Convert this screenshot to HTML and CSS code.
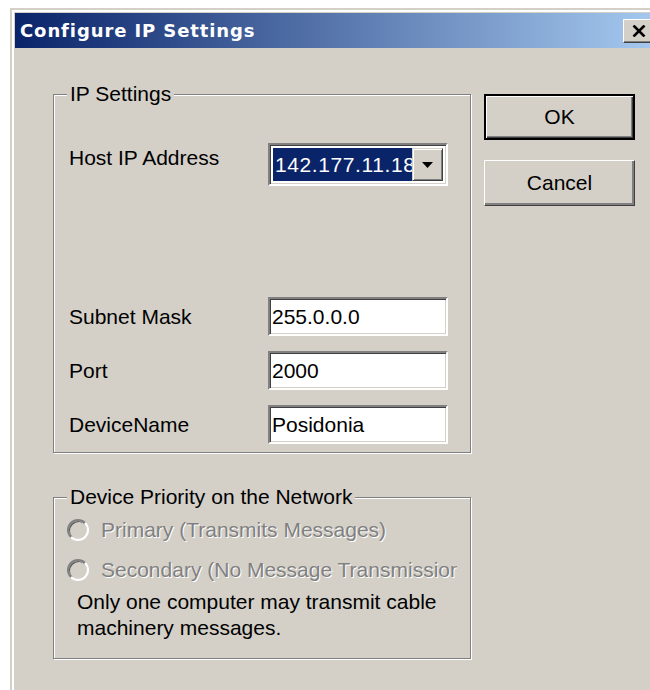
FILE: index.html
```html
<!DOCTYPE html>
<html lang="en">
<head>
<meta charset="utf-8">
<title>Configure IP Settings</title>
<link rel="stylesheet" href="styles.css">
</head>
<body>
<div class="window">
  <div class="titlebar">
    <span class="title">Configure IP Settings</span>
    <button class="close" type="button" aria-label="Close">
      <svg width="14" height="12" viewBox="0 0 14 12" aria-hidden="true">
        <path d="M1.5 0.5 L12.5 11.5 M12.5 0.5 L1.5 11.5" stroke="#000" stroke-width="2.6" fill="none"/>
      </svg>
    </button>
  </div>
  <div class="content">
    <div class="groups">
      <fieldset class="group group-ip">
        <legend>IP Settings</legend>
        <div class="row row-host">
          <span class="label">Host IP Address</span>
          <div class="combo">
            <span class="combo-value">142.177.11.18</span>
            <span class="combo-btn">
              <svg width="11" height="6" viewBox="0 0 11 6" aria-hidden="true"><path d="M0 0 H11 L5.5 6 Z" fill="#000"/></svg>
            </span>
          </div>
        </div>
        <div class="row row-field">
          <span class="label">Subnet Mask</span>
          <div class="field">255.0.0.0</div>
        </div>
        <div class="row row-field">
          <span class="label">Port</span>
          <div class="field">2000</div>
        </div>
        <div class="row row-field">
          <span class="label">DeviceName</span>
          <div class="field">Posidonia</div>
        </div>
      </fieldset>
      <fieldset class="group group-priority">
        <legend>Device Priority on the Network</legend>
        <div class="radio">
          <span class="radio-dot"></span>
          <span class="radio-label">Primary (Transmits Messages)</span>
        </div>
        <div class="radio">
          <span class="radio-dot"></span>
          <span class="radio-label">Secondary (No Message Transmission)</span>
        </div>
        <p class="note">Only one computer may transmit cable<br>machinery messages.</p>
      </fieldset>
    </div>
    <div class="actions">
      <button class="btn btn-default" type="button">OK</button>
      <button class="btn" type="button">Cancel</button>
    </div>
  </div>
</div>
</body>
</html>
```

FILE: styles.css
```css
html, body {
  margin: 0;
  padding: 0;
  background: #fff;
  overflow: hidden;
  height: 690px;
}

body {
  font-family: "Liberation Sans", Arial, sans-serif;
  font-size: 21px;
  color: #000;
}

/* dialog frame */
.window {
  margin: 8px 0 0 10px;
  width: 649px;
  height: 720px;
  box-sizing: border-box;
  border: 2px solid #d4d0c8;
  border-right: 0;
  padding: 3px 0 0 3px;
  background: #d4d0c8;
  box-shadow: inset 2px 2px 0 #fff;
}

.titlebar {
  height: 35px;
  display: flex;
  align-items: center;
  justify-content: space-between;
  padding: 0 4px 0 5px;
  background: linear-gradient(to right, #0a246a, #a6caf0);
}

.title {
  font-family: "DejaVu Sans", Verdana, sans-serif;
  font-weight: bold;
  font-size: 18px;
  letter-spacing: 0.9px;
  color: #fff;
}

.close {
  width: 32px;
  height: 24px;
  padding: 0;
  display: flex;
  align-items: center;
  justify-content: center;
  background: #d4d0c8;
  border: 1px solid;
  border-color: #fff #404040 #404040 #fff;
  box-shadow: inset -1px -1px 0 #808080;
}

/* dialog body */
.content {
  display: flex;
  align-items: flex-start;
  gap: 13px;
  padding: 34px 0 0 38px;
}

.groups {
  display: flex;
  flex-direction: column;
}

.group {
  width: 418px;
  box-sizing: border-box;
  margin: 0;
  min-width: 0;
  border: 1px solid #808080;
  box-shadow: inset 1px 1px 0 #fff, 1px 1px 0 #fff;
  padding: 0 0 0 13px;
}

.group legend {
  padding: 0 3px;
  line-height: 24px;
  background: #d4d0c8;
}

.group-ip {
  padding-top: 37px;
  padding-bottom: 8px;
}

.group-priority {
  margin-top: 32px;
  padding-top: 9px;
  padding-bottom: 17px;
}

/* label / input rows */
.row {
  display: flex;
  align-items: center;
  margin-left: 2px;
}

.label {
  width: 199px;
  flex: none;
  line-height: 24px;
}

.row-host {
  align-items: flex-start;
}

.row-host .label {
  padding-top: 3px;
}

.row-host + .row-field {
  margin-top: 111px;
}

.row-field + .row-field {
  margin-top: 15px;
}

.field {
  width: 180px;
  height: 39px;
  box-sizing: border-box;
  background: #fff;
  border: 2px solid;
  border-color: #808080 #fff #fff #808080;
  box-shadow: inset 1px 1px 0 #404040, inset -1px -1px 0 #d4d0c8;
  padding-left: 2px;
  line-height: 35px;
  white-space: nowrap;
  overflow: hidden;
}

.combo {
  width: 180px;
  height: 43px;
  box-sizing: border-box;
  display: flex;
  background: #fff;
  border: 2px solid;
  border-color: #808080 #fff #fff #808080;
  box-shadow: inset 1px 1px 0 #404040, inset -1px -1px 0 #d4d0c8;
  padding: 3px;
}

.combo-value {
  flex: 1;
  min-width: 0;
  background: #0a246a;
  color: #fff;
  padding-left: 2px;
  letter-spacing: 0.6px;
  line-height: 33px;
  white-space: nowrap;
  overflow: hidden;
}

.combo-btn {
  width: 31px;
  flex: none;
  box-sizing: border-box;
  display: flex;
  align-items: center;
  justify-content: center;
  background: #d4d0c8;
  border: 1px solid;
  border-color: #d4d0c8 #404040 #404040 #d4d0c8;
  box-shadow: inset 1px 1px 0 #fff, inset -1px -1px 0 #808080;
}

/* radio options (disabled) */
.radio {
  display: flex;
  align-items: center;
  height: 24px;
}

.radio + .radio {
  margin-top: 16px;
}

.radio-dot {
  width: 22px;
  height: 22px;
  flex: none;
  box-sizing: border-box;
  border-radius: 50%;
  border: 2px solid;
  border-color: #808080 #fff #fff #808080;
  box-shadow: inset 1px 1px 0 #5a5a5a;
  background: #d4d0c8;
}

.radio-label {
  margin-left: 12px;
  width: 356px;
  color: #808080;
  text-shadow: 1px 1px 0 #fff;
  white-space: nowrap;
  overflow: hidden;
  line-height: 24px;
}

.note {
  margin: 7px 0 0 10px;
  line-height: 26px;
}

/* command buttons */
.actions {
  display: flex;
  flex-direction: column;
  gap: 20px;
  padding-top: 12px;
}

.btn {
  width: 151px;
  height: 46px;
  box-sizing: border-box;
  font-family: "Liberation Sans", Arial, sans-serif;
  font-size: 21px;
  color: #000;
  background: #d4d0c8;
  border: 1px solid;
  border-color: #fff #404040 #404040 #fff;
  box-shadow: inset -2px -2px 0 #808080;
  padding: 0;
}

.btn-default {
  border: 2px solid #000;
  box-shadow: inset 1px 1px 0 #fff, inset -1px -1px 0 #404040, inset -2px -2px 0 #808080;
}
```
